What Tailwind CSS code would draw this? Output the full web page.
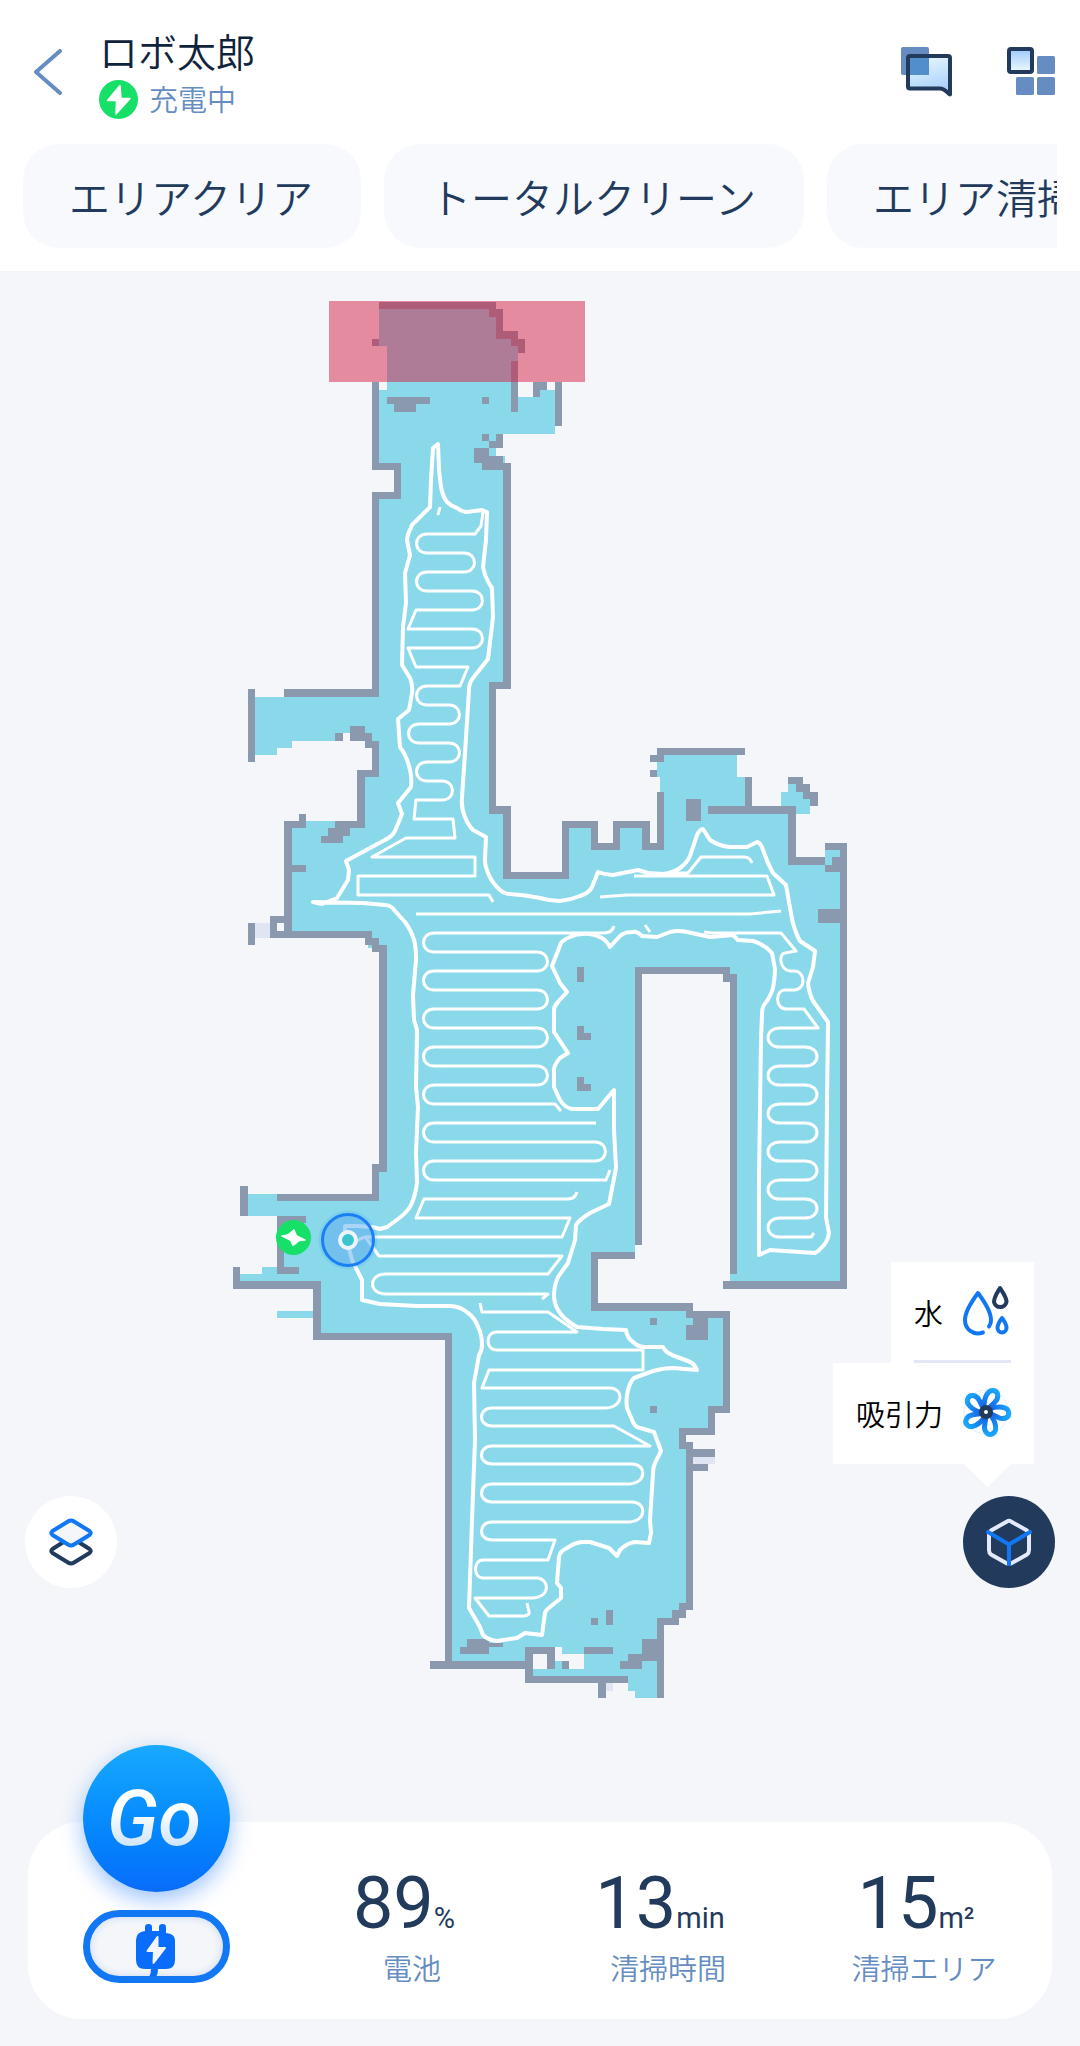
<!DOCTYPE html>
<html lang="ja">
<head>
<meta charset="utf-8">
<meta name="viewport" content="width=device-width, initial-scale=1">
<title>ロボ太郎</title>
<script src="https://cdn.jsdelivr.net/npm/@tailwindcss/browser@4"></script>
</head>
<body class="flex min-h-screen flex-col bg-[#f4f6fa] font-['Roboto','Noto_Sans_CJK_JP',sans-serif] font-[350] text-[#223b5c]">

<header class="bg-white pb-[23px] pt-8">
  <div class="flex h-28 items-start justify-between pl-[34px] pr-[25px]">
    <div class="flex items-start">
      <button type="button" aria-label="戻る" class="mt-[17px]">
        <svg class="block h-[46px] w-7" viewBox="0 0 28 46" fill="none" stroke="#668dc1" stroke-width="4" stroke-linecap="round" stroke-linejoin="round"><path d="M26 2 2 23l24 21"/></svg>
      </button>
      <div class="ml-[37px]">
        <h1 class="text-[39px] leading-[44px] text-[#10233c]">ロボ太郎</h1>
        <p class="mt-[3px] flex items-center gap-[11px] text-[29px] leading-9 text-[#668dc1]">
          <svg class="block size-[39px]" viewBox="0 0 39 39"><circle cx="19.500" cy="19.500" r="19.500" fill="#16e067"/><path d="M21 5.500 8.500 20.500h9l-.5 13.500L31 18.500h-9z" fill="#fff" stroke="#fff" stroke-width="1.500" stroke-linejoin="round"/></svg>
          <span class="pt-1">充電中</span>
        </p>
      </div>
    </div>
    <div class="mt-[15px] flex items-start gap-[55px]">
      <button type="button" aria-label="メッセージ">
        <svg class="block h-[50px] w-[51px]" viewBox="0 0 51 50">
          <defs><linearGradient id="chat" x1="0" y1="0" x2="0.300" y2="1"><stop offset="0" stop-color="#eefaff"/><stop offset="1" stop-color="#acd2fa"/></linearGradient></defs>
          <path d="M7 9H49V47C45 43 43 41.500 39 41.500H9Q7 41.500 7 39.500Z" fill="url(#chat)"/>
          <rect width="28" height="28" rx="2" fill="#668dc1"/>
          <path d="M9 11h19v17H9z" fill="#518ecb"/>
          <path d="M9 9H47Q49 9 49 11V47.500C45 44 43 41.500 39 41.500H9Q7 41.500 7 39.500V11Q7 9 9 9Z" fill="none" stroke="#223b5c" stroke-width="4" stroke-linejoin="round"/>
        </svg>
      </button>
      <button type="button" aria-label="メニュー">
        <svg class="block h-12 w-12" viewBox="0 0 48 48">
          <defs><linearGradient id="tile" x1="0" y1="0" x2="0" y2="1"><stop offset="0" stop-color="#9ec9fa"/><stop offset="1" stop-color="#eefaff"/></linearGradient></defs>
          <rect x="2" y="2" width="23" height="23" rx="2" fill="url(#tile)" stroke="#223b5c" stroke-width="4"/>
          <g fill="#668dc1"><rect x="30" y="9" width="18" height="18" rx="1.500"/><rect x="9" y="30" width="18" height="18" rx="1.500"/><rect x="30" y="30" width="18" height="18" rx="1.500"/></g>
        </svg>
      </button>
    </div>
  </div>
  <nav class="mx-[23px] flex gap-[23px] overflow-hidden whitespace-nowrap text-[41px] leading-[96px]">
    <button type="button" class="shrink-0 rounded-[36px] bg-[#f7f9fd] pl-[46px] pr-12 pt-2">エリアクリア</button>
    <button type="button" class="shrink-0 rounded-[36px] bg-[#f7f9fd] pl-[46px] pr-12 pt-2">トータルクリーン</button>
    <button type="button" class="shrink-0 rounded-[36px] bg-[#f7f9fd] pl-[46px] pr-12 pt-2">エリア清掃</button>
  </nav>
</header>

<main class="relative grow">
  <svg class="block w-full" viewBox="0 271 1080 1551" role="img" aria-label="清掃マップ">
    <!-- floor -->
    <g fill="#8ad9eb" shape-rendering="crispEdges">
      <path d="M379 302H496V331H511V346H518V397H540V390H555V434H496V456H505V685H492V810H506V875H565V824H594V846H616V824H646V846H660V777H657V755H737V777H745V808H792V861H825V850H844V1285H730V978H726V970H638V1245H635V1256H594V1306H690V1314H726V1410H712V1432H683V1446H690V1606H682V1614H676V1622H660V1698H635V1691H628V1680H529V1665H448V1337H317V1285H240V1274H262V1267H280V1216H248V1194H280V1198H375V1168H383V948H368V935H288V821H361V774H375V741H292V748H277V755H255V697H375V496H398V466H375V390H387V346H379Z"/>
      <path d="M788 784H796V792H803V799H810V814H796V806H781V792H788ZM277 1311H313V1318H277Z"/>
    </g>
    <g fill="#f4f6fa" shape-rendering="crispEdges"><path d="M343 733H350V741H343ZM533 1654H547V1669H533ZM555 1647H562V1654H584V1669H569V1661H555ZM496 448H503V456H496ZM380 470H372V492H394V470H380Z"/></g>
    <g fill="#dfe5f3" shape-rendering="crispEdges"><path d="M255 923H270V938H255ZM693 1457H715V1464H693ZM606 1683H613V1691H606Z"/></g>
    <!-- walls and obstacles -->
    <g fill="#8a99ad" shape-rendering="crispEdges">
      <path d="M379 302H496V309H503V331H518V339H525V353H518V346H511V339H496V317H489V309H379ZM372 339H379V346H372ZM511 361H518V412H511ZM533 382H547V390H540V397H533ZM555 382H562V426H555ZM387 397H430V404H416V412H394V404H387ZM482 397H489V404H482ZM482 434H489V441H482ZM496 434H503V448H489V441H496ZM474 448H489V456H503V463H511V689H496V806H511V872H562V821H598V843H613V821H650V843H657V792H664V850H642V828H620V850H591V828H569V879H503V814H489V682H503V470H482V463H474Z"/>
      <path d="M372 382H379V463H401V499H379V697H284V689H372V492H394V470H372ZM248 689H255V762H248ZM335 733H343V741H335ZM350 726H365V733H372V741H379V777H365V828H350V836H343V843H321V836H328V828H335V821H357V770H372V748H365V741H350ZM299 814H306V828H292V931H372V938H379V945H387V1172H379V1201H277V1194H372V1164H379V952H372V945H365V938H270V916H284V821H299ZM292 865H306V872H292ZM248 923H255V945H248Z"/>
      <path fill="#f4f6fa" d="M277 923H284V931H277Z"/>
      <path d="M650 755H657V748H745V755H664V762H650ZM650 770H657V777H650ZM745 777H752V806H796V857H825V865H788V814H708V806H745ZM686 799H701V821H686ZM788 777H803V784H810V792H818V806H810V799H803V792H796V784H788ZM825 843H847V1289H723V1281H840V923H818V909H840V872H825V865H832V857H840V850H825ZM635 967H730V974H737V1274H730V982H723V974H642V1245H635ZM577 967H584V982H577ZM577 1026H584V1033H591V1040H577ZM577 1077H584V1084H591V1091H577Z"/>
      <path d="M591 1252H635V1259H598V1303H693V1311H730V1413H715V1435H686V1442H693V1449H715V1457H693V1464H708V1471H693V1610H686V1618H679V1625H664V1698H657V1661H642V1669H620V1661H628V1654H642V1639H657V1618H672V1610H679V1603H686V1449H679V1428H708V1406H723V1318H708V1340H686V1325H693V1318H686V1311H591ZM650 1318H657V1325H650ZM650 1406H657V1413H650ZM591 1618H598V1625H591ZM606 1610H613V1625H606ZM584 1647H613V1654H584ZM562 1661H569V1669H562Z"/>
      <path d="M240 1186H248V1216H240ZM277 1216H306V1223H284V1267H299V1274H277ZM233 1267H240V1281H321V1333H452V1661H525V1647H555V1669H547V1654H533V1676H628V1683H606V1698H598V1683H525V1669H430V1661H445V1340H313V1289H233ZM467 1639H489V1643H503V1647H489V1654H460V1647H467Z"/>
    </g>
    <rect x="329" y="301" width="256" height="81" fill="#d42046" fill-opacity="0.500"/>

    <!-- back-and-forth lanes -->
    <g fill="none" stroke="#fff" stroke-width="3" stroke-linejoin="round">
      <path d="M440 507L438 515M483 512L481 526L475 534H427C413 534 413 553 427 553H464C478 553 478 572 464 572H427C413 572 413 591 427 591H472C486 591 486 610 472 610H416L408 629H472C486 629 486 648 472 648H408L416 667H468L460 686H427C413 686 413 705 427 705H449C463 705 463 724 449 724H419C405 724 405 743 419 743H449C463 743 463 762 449 762H427C413 762 413 781 427 781H442C456 781 456 800 442 800H416L414 819H453L455 838H406L372 857H475V876H358V895H489L493 902"/>
      <path d="M416 914H750L781 911M600 897L627 895H774L767 876H634M670 873H688L701 857H744Q750 857 752 863M645 925L650 932M614 926Q612 933 604 933H434C420 933 420 952 434 952H537C551 952 551 971 537 971H434C420 971 420 990 434 990H537C551 990 551 1009 537 1009H434C420 1009 420 1028 434 1028H537C551 1028 551 1047 537 1047H434C420 1047 420 1066 434 1066H537C551 1066 551 1085 537 1085H434C420 1085 420 1104 434 1104H555L561 1111"/>
      <path d="M596 1123H434C420 1123 420 1142 434 1142H595C609 1142 609 1161 595 1161H434C420 1161 420 1180 434 1180H606L610 1170M577 1192Q575 1199 568 1199H424L416 1218H570L562 1237H370Q364 1236 357 1241M366 1238L379 1256H562L548 1274H386C368 1274 368 1294 386 1294H548L542 1299"/>
      <path d="M480 1303L482 1312H548L577 1332H497C485 1332 485 1350 497 1350H643V1370H489L482 1388H610C624 1388 624 1408 605 1408H492C478 1408 478 1426 492 1426H614L650 1446H492C478 1446 478 1464 492 1464H632C647 1464 647 1484 628 1484H492C478 1484 478 1502 492 1502H632C647 1502 647 1522 628 1522H492C478 1522 478 1540 492 1540H555L548 1560H483C473 1560 473 1578 483 1578H538C550 1580 550 1598 532 1598H475L489 1616H524Q530 1615 529 1612L527 1603"/>
      <path d="M704 932L712 933H781L796 951L785 953C778 954 780 970 790 971H794C806 971 806 990 794 990H785C775 990 775 1009 786 1009H804L818 1028H780C764 1028 764 1047 780 1047H805C821 1047 821 1066 805 1066H780C764 1066 764 1085 780 1085H805C821 1085 821 1104 805 1104H780C764 1104 764 1123 780 1123H805C821 1123 821 1142 805 1142H780C764 1142 764 1161 780 1161H805C821 1161 821 1180 805 1180H780C764 1180 764 1199 780 1199H805C821 1199 821 1218 805 1218H780C764 1218 764 1237 780 1237H811L814 1233"/>
    </g>
    <!-- route along the edges -->
    <g fill="none" stroke="#fff" stroke-width="4" stroke-linejoin="round" stroke-linecap="round">
      <path d="M345 1233V1226H358L372 1227L380 1229L387 1227L398 1219Q406 1213 410 1207Q415 1198 417 1183L416 1153L418 1107L416 1087L417 1030L414 1020L413 995L416 960Q416 946 414 940Q411 930 405 922L395 911Q391 905 385 905L363 903L313 902L322 904L337 898L348 880L349 870L346 861L383 841Q392 837 395 831L402 814L398 803L411 787Q412 778 410 770Q407 756 400 747L398 719L409 710L412 693Q413 684 410 678L402 665L403 627L406 603L405 573L410 555L407 540Q408 532 411 528Q411 525 415 522L430 507L431 480L433 448L438 444L439 470L441 487Q443 497 447 502Q451 506 457 508Q462 512 467 512L482 510L487 512L486 540L483 567Q485 578 492 588L493 617L488 659L473 678Q469 683 469 690L465 753L462 797Q461 808 465 817Q468 825 473 830L486 837L485 860Q485 866 487 870Q490 880 497 887Q503 894 510 894Q526 895 540 898Q550 901 560 901Q570 900 580 896Q589 893 592 887L598 872Q606 875 613 875L638 870L648 873L663 874Q673 873 680 868Q687 863 690 856L697 835Q700 829 703 829L710 840Q719 846 730 847H747L757 842Q761 843 763 850L768 863L773 873L786 885L792 919Q795 932 800 941L815 951L813 967L808 983Q809 993 813 1001L828 1022L827 1103L826 1217L829 1233Q828 1241 823 1246Q819 1251 815 1253L770 1250L759 1255V1179L761 1038L762 1015Q762 1008 764 1005Q770 998 773 988Q775 978 775 969L772 953Q764 944 753 941L738 940L733 935L710 937L687 932Q678 930 670 932L657 937L642 936Q637 931 633 932Q624 932 620 936L610 947Q606 940 602 938Q592 933 582 934Q575 934 570 937Q563 940 561 943L552 966L560 983L567 992L558 1002Q554 1006 554 1010V1032L568 1053L560 1058Q554 1065 554 1070V1087L560 1100Q566 1109 573 1109H598L614 1090V1130L616 1168L609 1204L590 1213Q580 1219 576 1225L575 1240L568 1263L558 1277Q554 1286 554 1295Q554 1303 558 1310Q563 1319 577 1327L603 1329L626 1330Q627 1338 633 1342Q638 1347 645 1347H663L665 1350Q668 1354 677 1357L688 1361Q694 1363 697 1370L673 1368Q663 1368 653 1371L634 1378Q629 1383 627 1395Q626 1402 627 1408L633 1422Q635 1427 640 1428L654 1432L661 1451L655 1463Q653 1467 653 1473L650 1520L651 1533L649 1543L635 1542Q627 1543 620 1550L617 1556L609 1548L590 1542H582Q574 1543 567 1548Q560 1551 559 1557L557 1583L561 1588V1598L550 1607Q545 1611 545 1613L542 1635L525 1633L517 1638L497 1641Q488 1640 483 1635L480 1627L469 1608L472 1520L475 1440L474 1383L479 1355Q482 1351 482 1345Q482 1334 478 1327Q475 1318 468 1313Q460 1306 450 1306H417L380 1304L362 1300V1280L352 1260L348 1245"/>
    </g>
    <g fill="none" stroke-width="3"><circle cx="348" cy="1240" r="28" stroke="#1a7ff5" stroke-opacity="0.120"/><circle cx="348" cy="1240" r="25.500" fill="#59aaf0" fill-opacity="0.500" stroke="#1a7ff5"/><circle cx="348" cy="1240" r="8" fill="#3cc4cf" stroke="#edf4fd" stroke-width="4"/></g>
    <circle cx="293.500" cy="1237.500" r="17.500" fill="#16e067"/>
    <path d="M281.500 1236L288 1234.500L294 1229.500L296.500 1235.500L305.500 1240L299 1241L293 1246L290.500 1240.500Z" fill="#fff" stroke="#fff" stroke-width="1" stroke-linejoin="round"/>
  </svg>

  <button type="button" aria-label="マップ切替" class="absolute bottom-[234px] left-[25px] flex size-[92px] items-center justify-center rounded-full bg-white">
    <svg class="block h-12 w-11" viewBox="0 0 44 48" stroke-width="4" stroke-linejoin="round"><path d="M20 20.500 3.500 31Q1 33 3.500 35L19 44.500Q22 46.500 25 44.500L40.500 35Q43 33 40.500 31L24 20.500Z" fill="#fff" stroke="#223b5c"/><path d="M19 3.500Q22 1.500 25 3.500L40.500 13Q43 15 40.500 17L25 26.500Q22 28.500 19 26.500L3.500 17Q1 15 3.500 13Z" fill="#f4f6fa" stroke="#1277f3"/></svg>
  </button>

  <div class="absolute bottom-[234px] right-[25px] flex flex-col items-end">
    <div class="relative mb-8 mr-[21px] flex flex-col items-end text-[29px] leading-[90px] text-black">
      <button type="button" class="bg-white px-[23px]">
        <span class="flex items-center gap-5 border-b-3 border-[#e2e7f5]"><span class="pt-2">水</span>
          <svg class="block size-12 overflow-visible" viewBox="0 0 48 48" fill="none" stroke="#1277f3" stroke-width="4" stroke-linecap="round" stroke-linejoin="round"><path d="M20 45.500C10 49 2 42 2 33C2 24 9 14 15 6C21 14 28 24 28 33Q28 37 26 39.500"/><path d="M37 1C34 6 31 10 31 15A6.500 7 0 0 0 43.500 15C43.500 10 40 6 37 1Z" stroke="#223b5c"/><path d="M39 31C37 34 34.500 37 34.500 41A4.500 4.500 0 0 0 43.500 41C43.500 37 41 34 39 31Z"/></svg>
        </span>
      </button>
      <button type="button" class="bg-white px-[23px]">
        <span class="flex items-center gap-5 border-b-3 border-white"><span class="pt-2">吸引力</span>
          <svg class="block size-12 overflow-visible" viewBox="-23 -24 48 48" fill="none">
            <defs><radialGradient id="fan" gradientUnits="userSpaceOnUse" cx="0" cy="0" r="23"><stop offset="0.300" stop-color="#1568e8"/><stop offset="1" stop-color="#1aa6fb"/></radialGradient></defs>
            <circle r="22" stroke="#e2ecfc" stroke-width="1"/>
            <g stroke="url(#fan)" stroke-width="5" stroke-linejoin="round">
              <path id="blade" d="M-2-5C-2-15 2-22 7-21.500C13-21 13-14 9-10Q6-7 3-4"/>
              <use href="#blade" transform="rotate(72)"/><use href="#blade" transform="rotate(144)"/><use href="#blade" transform="rotate(216)"/><use href="#blade" transform="rotate(288)"/>
            </g>
            <circle r="4.500" fill="#fff" stroke="#223b5c" stroke-width="5"/>
          </svg>
        </span>
      </button>
      <svg class="absolute right-[23px] top-full block h-[23px] w-[47px]" viewBox="0 0 47 23"><path d="M0 0H47L23.500 23Z" fill="#fff"/></svg>
    </div>
    <button type="button" aria-label="清掃モード" class="flex size-[92px] items-center justify-center rounded-full bg-[#223b5c]">
      <svg class="block size-12" viewBox="0 0 48 48" fill="none" stroke-linejoin="round"><path d="M22 3.500Q24 2 26 3.500L42 12.500Q44 14 44 16V32Q44 35 42 36.500L26 45.500Q24 46.500 22 45.500L6 36.500Q4 35 4 32V16Q4 14 6 12.500Z" stroke="#e4eafa" stroke-width="4"/><path d="M3 14 24 26.500 45 14M24 26.500V48" stroke="#1277f3" stroke-width="4" stroke-linecap="round"/></svg>
    </button>
  </div>
</main>

<footer class="relative mx-7 mb-[27px] grid grid-cols-4 rounded-[54px] bg-white pb-[33px]">
  <div class="-mt-[77px] flex flex-col items-center gap-[18px]">
    <button type="button" class="flex size-[147px] items-center justify-center rounded-full bg-linear-to-b from-[#19a9ff] to-[#0a6cfb] shadow-[0_8px_22px_#0a6cfb66]">
      <span class="bg-linear-to-b from-white from-40% to-[#b5d6fa] bg-clip-text pr-1 text-[78px] font-medium italic leading-[96px] text-transparent">Go</span>
    </button>
    <button type="button" aria-label="充電に戻る" class="flex h-[73px] w-[147px] justify-center overflow-hidden rounded-full border-7 border-[#1277f3] bg-[#f4f6fa] shadow-[inset_0_0_8px_#c9d6f3]">
      <svg class="block h-[59px] w-10" viewBox="0 0 40 59"><path d="M9 16V10Q9 7 12.500 7T16 10V14H23V10Q23 7 26.500 7T30 10V16Q39 17 39 23V43Q39 52 30 52H22Q22 57 20 60H13Q15 57 15 52H9Q0 52 0 43V23Q0 15 9 14Z" fill="#0a6cfb"/><path d="M21.500 20 11.500 34H18L17.500 46 29 31H21.500Z" fill="#f4f6fa" stroke="#f4f6fa" stroke-width="2" stroke-linejoin="round"/></svg>
    </button>
  </div>
  <div class="flex flex-col items-center gap-3.5 pt-[46px]">
    <p class="whitespace-nowrap pr-4 text-[72px] font-normal leading-[72px]">89<span class="text-[29px] leading-none">%</span></p>
    <p class="text-[29px] leading-8 text-[#668dc1]">電池</p>
  </div>
  <div class="flex flex-col items-center gap-3.5 pt-[46px]">
    <p class="whitespace-nowrap pr-4 text-[72px] font-normal leading-[72px]">13<span class="text-[29px] leading-none">min</span></p>
    <p class="text-[29px] leading-8 text-[#668dc1]">清掃時間</p>
  </div>
  <div class="flex flex-col items-center gap-3.5 pt-[46px]">
    <p class="whitespace-nowrap pr-4 text-[72px] font-normal leading-[72px]">15<span class="text-[29px] leading-none">m²</span></p>
    <p class="text-[29px] leading-8 text-[#668dc1]">清掃エリア</p>
  </div>
</footer>
</body>
</html>
